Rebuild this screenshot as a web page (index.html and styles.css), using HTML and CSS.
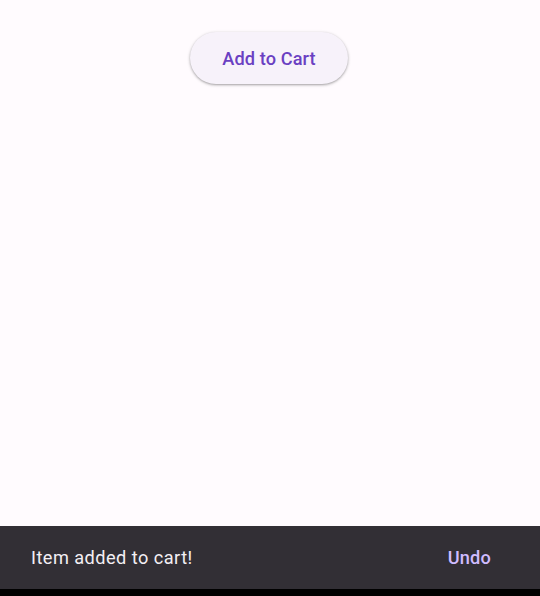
FILE: index.html
```html
<!DOCTYPE html>
<html>
<head>
<meta charset="utf-8">
<link rel="stylesheet" href="styles.css">
</head>
<body>
<div class="app">
  <main class="content">
    <button class="cart-btn">Add to Cart</button>
  </main>
  <div class="snackbar">
    <span class="snack-text">Item added to cart!</span>
    <span class="snack-action">Undo</span>
  </div>
  <div class="navbar"></div>
</div>
</body>
</html>
```
FILE: styles.css
```css
html, body {
  margin: 0;
  padding: 0;
  height: 100%;
}
body {
  font-family: Roboto, "Noto Sans", sans-serif;
  background: #fffbfe;
}
.app {
  display: flex;
  flex-direction: column;
  height: 596px;
}
.content {
  flex: 1;
  display: flex;
  justify-content: center;
  align-items: flex-start;
  padding-top: 32px;
  padding-right: 2px;
}
.cart-btn {
  height: 52px;
  padding: 0 32px;
  border: none;
  border-radius: 26px;
  background: #f7f2fa;
  color: #6a40c2;
  font-family: Roboto, sans-serif;
  font-weight: 500;
  font-size: 18.2px;
  letter-spacing: 0.1px;
  box-shadow: 0 1px 2px rgba(0,0,0,0.25), 0 1px 3px 1px rgba(0,0,0,0.1);
  cursor: pointer;
}
.snackbar {
  height: 63px;
  background: #322f35;
  display: flex;
  align-items: center;
  justify-content: space-between;
  padding: 0 49px 0 31px;
}
.snack-text {
  color: #f4eff4;
  font-size: 18.2px;
  letter-spacing: 0.45px;
}
.snack-action {
  color: #d0bcff;
  font-size: 18.2px;
  font-weight: 500;
  letter-spacing: 0.15px;
}
.navbar {
  height: 7px;
  background: #000;
}
```
